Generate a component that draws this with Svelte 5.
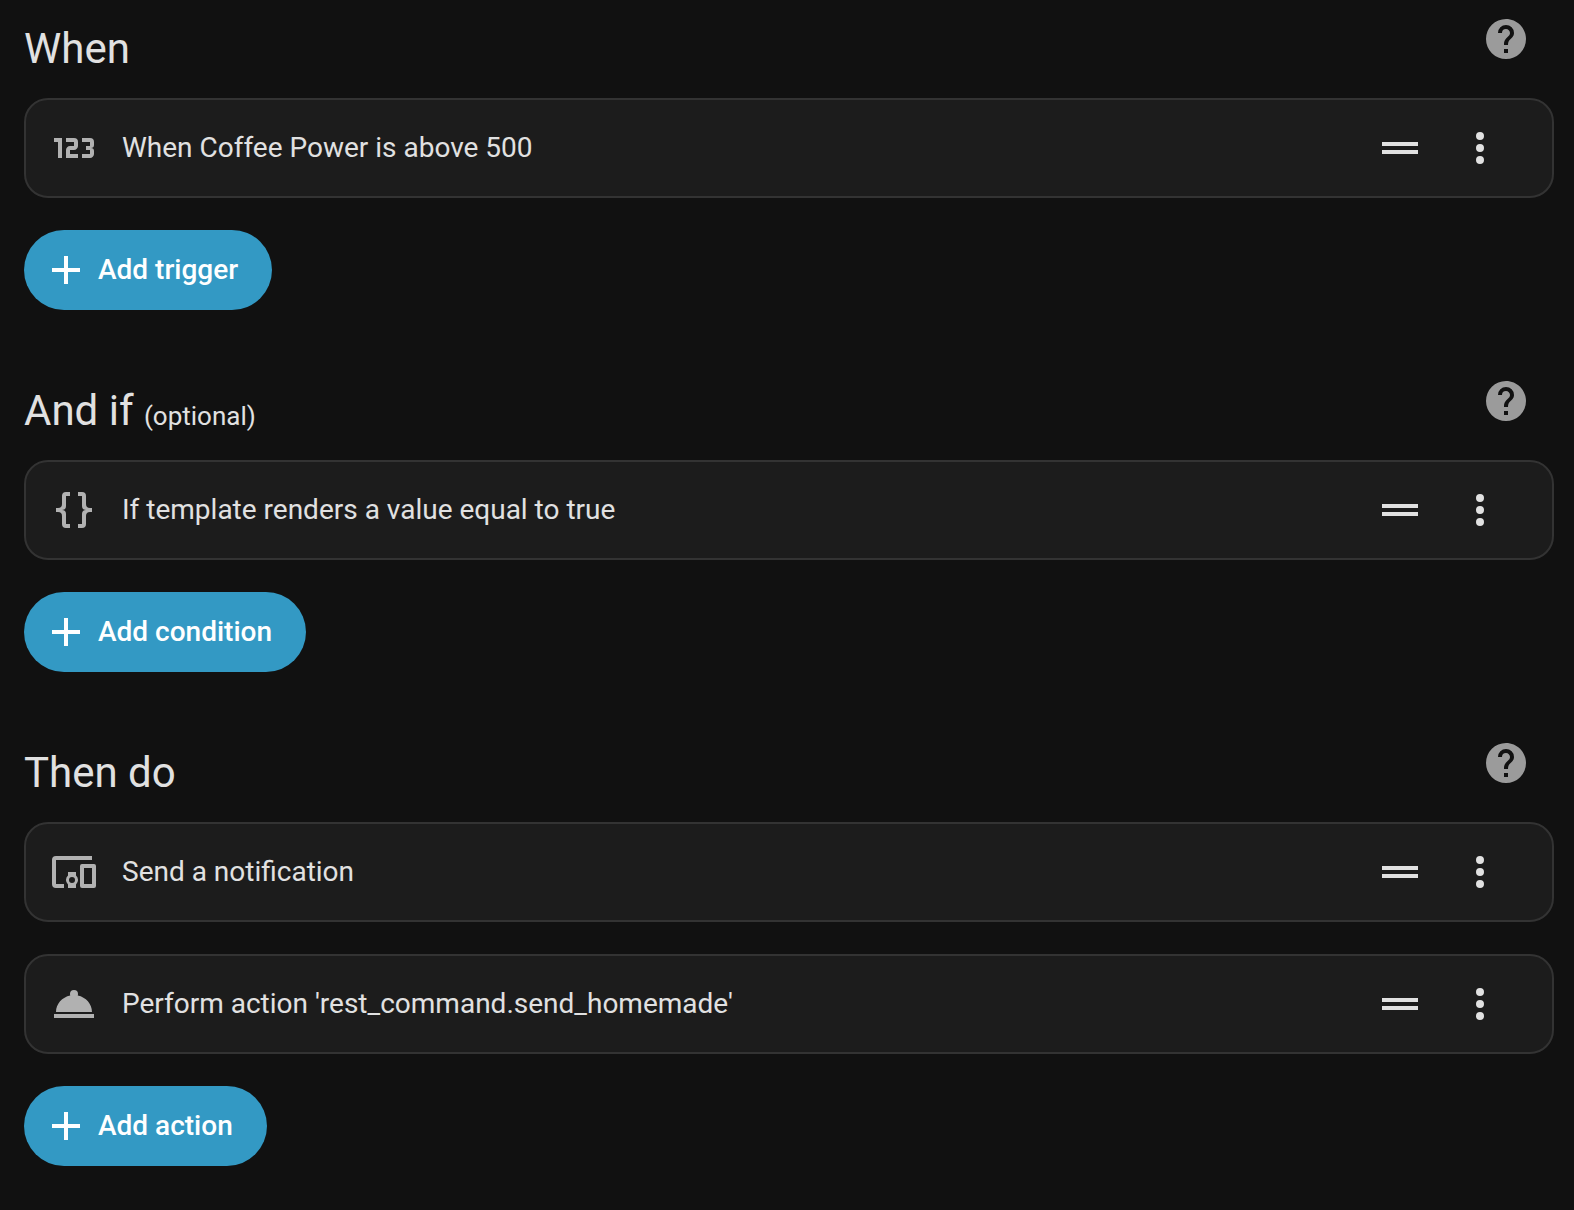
<script>
	// Icon paths (24x24 grid)
	const icons = {
		numeric: 'M4,17V9H2V7H6V17H4M22,15C22,16.11 21.1,17 20,17H16V15H20V13H18V11H20V9H16V7H20A2,2 0 0,1 22,9V10.5A1.5,1.5 0 0,1 20.5,12A1.5,1.5 0 0,1 22,13.5V15M14,15V17H8V13C8,11.89 8.9,11 10,11H12V9H8V7H12A2,2 0 0,1 14,9V11C14,12.11 13.1,13 12,13H10V15H14Z',
		braces: 'M8,3A2,2 0 0,0 6,5V9A2,2 0 0,1 4,11H3V13H4A2,2 0 0,1 6,15V19A2,2 0 0,0 8,21H10V19H8V14A2,2 0 0,0 6,12A2,2 0 0,0 8,10V5H10V3M16,3A2,2 0 0,1 18,5V9A2,2 0 0,0 20,11H21V13H20A2,2 0 0,0 18,15V19A2,2 0 0,1 16,21H14V19H16V14A2,2 0 0,1 18,12A2,2 0 0,1 16,10V5H14V3H16Z',
		devices: 'M3 6H21V4H3A2 2 0 0 0 1 6V18A2 2 0 0 0 3 20H7V18H3M13 12H9V13.78A2.94 2.94 0 0 0 9 18.22V20H13V18.22A2.94 2.94 0 0 0 13 13.78M11 17.5A1.5 1.5 0 1 1 12.5 16A1.5 1.5 0 0 1 11 17.5M22 8H16A1 1 0 0 0 15 9V19A1 1 0 0 0 16 20H22A1 1 0 0 0 23 19V9A1 1 0 0 0 22 8M21 18H17V10H21Z',
		service: 'M12,5A2,2 0 0,1 14,7C14,7.24 13.96,7.47 13.88,7.69C17.95,8.5 21,11.91 21,16H3C3,11.91 6.05,8.5 10.12,7.69C10.04,7.47 10,7.24 10,7A2,2 0 0,1 12,5M22,19H2V17H22V19Z',
		help: 'M15.07,11.25L14.17,12.17C13.45,12.89 13,13.5 13,15H11V14.5C11,13.39 11.45,12.39 12.17,11.67L13.41,10.41C13.78,10.05 14,9.55 14,9C14,7.89 13.1,7 12,7A2,2 0 0,0 10,9H8A4,4 0 0,1 12,5A4,4 0 0,1 16,9C16,9.88 15.64,10.67 15.07,11.25M13,19H11V17H13M12,2A10,10 0 0,0 2,12A10,10 0 0,0 12,22A10,10 0 0,0 22,12C22,6.47 17.5,2 12,2Z',
		drag: 'M21 11H3V9H21V11M21 13H3V15H21V13Z',
		dots: 'M12,16A2,2 0 0,1 14,18A2,2 0 0,1 12,20A2,2 0 0,1 10,18A2,2 0 0,1 12,16M12,10A2,2 0 0,1 14,12A2,2 0 0,1 12,14A2,2 0 0,1 10,12A2,2 0 0,1 12,10M12,4A2,2 0 0,1 14,6A2,2 0 0,1 12,8A2,2 0 0,1 10,6A2,2 0 0,1 12,4Z',
		plus: 'M19,13H13V19H11V13H5V11H11V5H13V11H19V13Z'
	};

	let sections = [
		{
			title: 'When',
			add: 'Add trigger',
			rows: [{ icon: 'numeric', text: 'When Coffee Power is above 500' }]
		},
		{
			title: 'And if',
			optional: true,
			add: 'Add condition',
			rows: [{ icon: 'braces', text: 'If template renders a value equal to true' }]
		},
		{
			title: 'Then do',
			add: 'Add action',
			rows: [
				{ icon: 'devices', text: 'Send a notification' },
				{ icon: 'service', text: "Perform action 'rest_command.send_homemade'" }
			]
		}
	];
</script>

{#snippet icon(name)}
	<svg viewBox="0 0 24 24" aria-hidden="true"><path d={icons[name]} /></svg>
{/snippet}

<main>
	{#each sections as section}
		<section>
			<header>
				<h2>
					{section.title}
					{#if section.optional}<small>(optional)</small>{/if}
				</h2>
				<button class="icon-button help" aria-label="Help">{@render icon('help')}</button>
			</header>

			<div class="rows">
				{#each section.rows as row}
					<div class="card">
						<span class="type">{@render icon(row.icon)}</span>
						<h3>{row.text}</h3>
						<button class="icon-button" aria-label="Move">{@render icon('drag')}</button>
						<button class="icon-button" aria-label="Menu">{@render icon('dots')}</button>
					</div>
				{/each}
				<button class="add">
					{@render icon('plus')}
					{section.add}
				</button>
			</div>
		</section>
	{/each}
</main>

<style>
	:global(body) {
		background-color: #111111;
		color: #e1e1e1;
		font-family: Roboto, sans-serif;
	}
	main {
		padding: 0 20px 44px 24px;
	}
	section + section {
		margin-top: 52px;
	}
	header {
		display: flex;
		justify-content: space-between;
		align-items: flex-start;
		padding: 15px 24px 23px 0;
	}
	h2 {
		margin: 8px 0 0;
		font-size: 42px;
		font-weight: 400;
		line-height: 52px;
	}
	small {
		font-size: 26px;
		line-height: 32px;
	}
	h3 {
		flex: 1;
		margin: 0;
		font-size: 28px;
		font-weight: 400;
		line-height: 40px;
	}
	svg {
		display: block;
		width: 48px;
		height: 48px;
		fill: currentColor;
	}
	button {
		border: none;
		font-family: inherit;
		cursor: pointer;
	}
	.rows {
		display: flex;
		flex-direction: column;
		align-items: flex-start;
		gap: 32px;
	}
	.card {
		display: flex;
		align-items: center;
		box-sizing: border-box;
		width: 100%;
		min-height: 100px;
		padding: 0 48px 0 24px;
		gap: 32px;
		background-color: #1c1c1c;
		border: 2px solid #333333;
		border-radius: 24px;
	}
	.type {
		margin-right: -8px;
		color: #b1b1b1;
	}
	.icon-button {
		padding: 0;
		background: none;
		color: #e1e1e1;
	}
	.help {
		color: #9b9b9b;
	}
	.add {
		display: flex;
		align-items: center;
		height: 80px;
		padding: 0 34px 0 18px;
		gap: 8px;
		background-color: #3399c4;
		color: #ffffff;
		border-radius: 40px;
		font-size: 28px;
		font-weight: 500;
		line-height: 32px;
	}
</style>
